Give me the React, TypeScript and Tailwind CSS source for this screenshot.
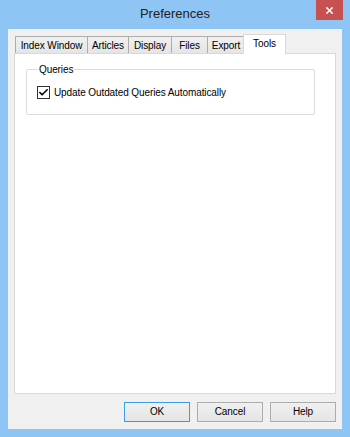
import { Check, X } from "lucide-react";

const tabs = [
  { label: "Index Window", w: "w-[73px]" },
  { label: "Articles", w: "w-[42px]" },
  { label: "Display", w: "w-[44px]" },
  { label: "Files", w: "w-[37px]" },
  { label: "Export", w: "w-[38px]" },
];

function Button({ label, primary }: { label: string; primary?: boolean }) {
  return (
    <button
      className={`h-[20px] w-[66px] border bg-gradient-to-b from-[#f0f0f0] to-[#e5e5e5] text-[10px] leading-none text-black ${
        primary ? "border-[#3c9be8]" : "border-[#acacac]"
      }`}
    >
      {label}
    </button>
  );
}

export default function App() {
  return (
    <div
      className="flex h-[437px] w-[350px] flex-col bg-[#8ec5f4] tracking-[-0.1px]"
      style={{ fontFamily: '"Liberation Sans", Arial, sans-serif' }}
    >
      {/* title bar */}
      <div className="flex h-[29px] items-start">
        <div className="flex h-[28px] flex-1 items-center justify-center pl-[34px] text-[13px] tracking-normal text-[#222]">
          Preferences
        </div>
        <div className="mr-[7px] flex h-[20px] w-[27px] items-center justify-center bg-[#c75050]">
          <X size={11} strokeWidth={3.5} className="text-white" />
        </div>
      </div>

      {/* client area */}
      <div className="mx-[8px] mb-[8px] flex flex-1 flex-col bg-[#f0f0f0] px-[6px] pt-[5px] pb-[7px]">
        {/* tab strip */}
        <div className="flex h-[19px] items-end pl-[1px]">
          {tabs.map((t) => (
            <div
              key={t.label}
              className={`-mr-[1px] flex h-[17px] ${t.w} items-center justify-center border border-b-0 border-[#acacac] bg-gradient-to-b from-[#f0f0f0] to-[#e5e5e5] text-[10px] text-black`}
            >
              {t.label}
            </div>
          ))}
          <div className="relative z-10 -mb-[1px] -ml-[1px] flex h-[20px] w-[43px] items-center justify-center border border-b-0 border-[#d9d9d9] bg-white pb-[3px] text-[10px] text-black">
            Tools
          </div>
        </div>

        {/* tab panel */}
        <div className="flex-1 border border-[#d9d9d9] bg-white pt-[9px] pl-[11px] pr-[20px]">
          <fieldset className="h-[52px] rounded-[2px] border border-[#dcdcdc] px-[10px]">
            <legend className="ml-[1px] px-[1px] text-[10px] leading-[13px] text-black">Queries</legend>
            <label className="mt-[9px] flex items-center gap-[4px] text-[10px] text-black">
              <span className="flex h-[13px] w-[13px] items-center justify-center border border-[#333] bg-white">
                <Check size={11} strokeWidth={3.5} className="text-black" />
              </span>
              Update Outdated Queries Automatically
            </label>
          </fieldset>
        </div>

        {/* buttons */}
        <div className="mt-[8px] flex justify-end gap-[7px]">
          <Button label="OK" primary />
          <Button label="Cancel" />
          <Button label="Help" />
        </div>
      </div>
    </div>
  );
}
